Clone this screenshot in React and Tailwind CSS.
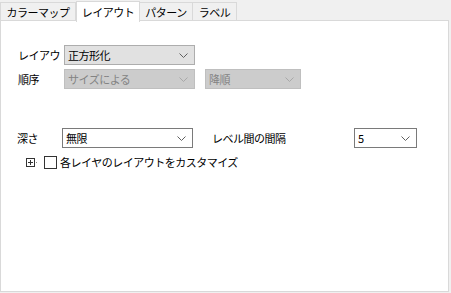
import React from "react";

const font = { fontFamily: '"Noto Sans CJK JP", "Noto Sans", sans-serif' };

function Chevron({ color = "#606060" }) {
  return (
    <svg width="9" height="5" viewBox="0 0 9 5" className="shrink-0">
      <path d="M0.5 0.5 L4.5 4.5 L8.5 0.5" fill="none" stroke={color} strokeWidth="1" />
    </svg>
  );
}

function Combo({ value, width, variant }) {
  const cls =
    variant === "gray"
      ? "bg-[#e1e1e1] border-[#adadad] text-black"
      : variant === "disabled"
      ? "bg-[#cccccc] border-[#bfbfbf] text-[#838383]"
      : "bg-white border-[#7a7a7a] text-black";
  return (
    <div
      className={`flex items-center justify-between h-[20px] border pl-[3px] pr-[6px] whitespace-nowrap ${cls}`}
      style={{ width }}
    >
      <span>{value}</span>
      <Chevron color={variant === "disabled" ? "#a8a8a8" : "#606060"} />
    </div>
  );
}

export default function App() {
  return (
    <div className="w-[451px] h-[293px] bg-[#f0f0f0] flex flex-col text-[11px] tracking-[-0.5px] leading-none" style={font}>
      <div className="flex h-[21px] items-end text-black whitespace-nowrap">
        <div className="h-[19px] w-[76px] border border-b-0 border-[#d9d9d9] flex items-center justify-center">カラーマップ</div>
        <div className="h-[21px] w-[64px] -mb-px relative z-10 bg-white border border-b-0 border-[#d9d9d9] flex items-center justify-center">レイアウト</div>
        <div className="h-[19px] w-[53px] border border-b-0 border-l-0 border-[#d9d9d9] flex items-center justify-center">パターン</div>
        <div className="h-[19px] w-[44px] border border-b-0 border-l-0 border-[#d9d9d9] flex items-center justify-center">ラベル</div>
      </div>
      <div className="w-[449px] h-[272px] bg-white border border-[#d9d9d9] -mt-px text-black whitespace-nowrap">
        <div className="flex items-center mt-[24px] h-[20px]">
          <span className="w-[46px] ml-[17px]">レイアウ</span>
          <Combo value="正方形化" width={131} variant="gray" />
        </div>
        <div className="flex items-center mt-[4px] h-[20px]">
          <span className="w-[46px] ml-[17px]">順序</span>
          <Combo value="サイズによる" width={131} variant="disabled" />
          <div className="ml-[10px]">
            <Combo value="降順" width={96} variant="disabled" />
          </div>
        </div>
        <div className="flex items-center mt-[39px] h-[20px]">
          <span className="w-[45px] ml-[16px]">深さ</span>
          <Combo value="無限" width={131} variant="white" />
          <span className="ml-[19px] w-[142px]">レベル間の間隔</span>
          <Combo value="5" width={63} variant="white" />
        </div>
        <div className="flex items-center mt-[7px] h-[15px] ml-[25px]">
          <svg width="12" height="9" viewBox="0 0 12 9" className="shrink-0">
            <rect x="0.5" y="0.5" width="8" height="8" fill="white" stroke="#333" />
            <path d="M2 4.5 H7 M4.5 2 V7" stroke="#333" strokeWidth="1" />
            <path d="M10 4.5 H11" stroke="#888" strokeWidth="1" />
          </svg>
          <div className="ml-[6px] w-[13px] h-[13px] border border-[#333] bg-white" />
          <span className="ml-[3px]">各レイヤのレイアウトをカスタマイズ</span>
        </div>
      </div>
    </div>
  );
}
